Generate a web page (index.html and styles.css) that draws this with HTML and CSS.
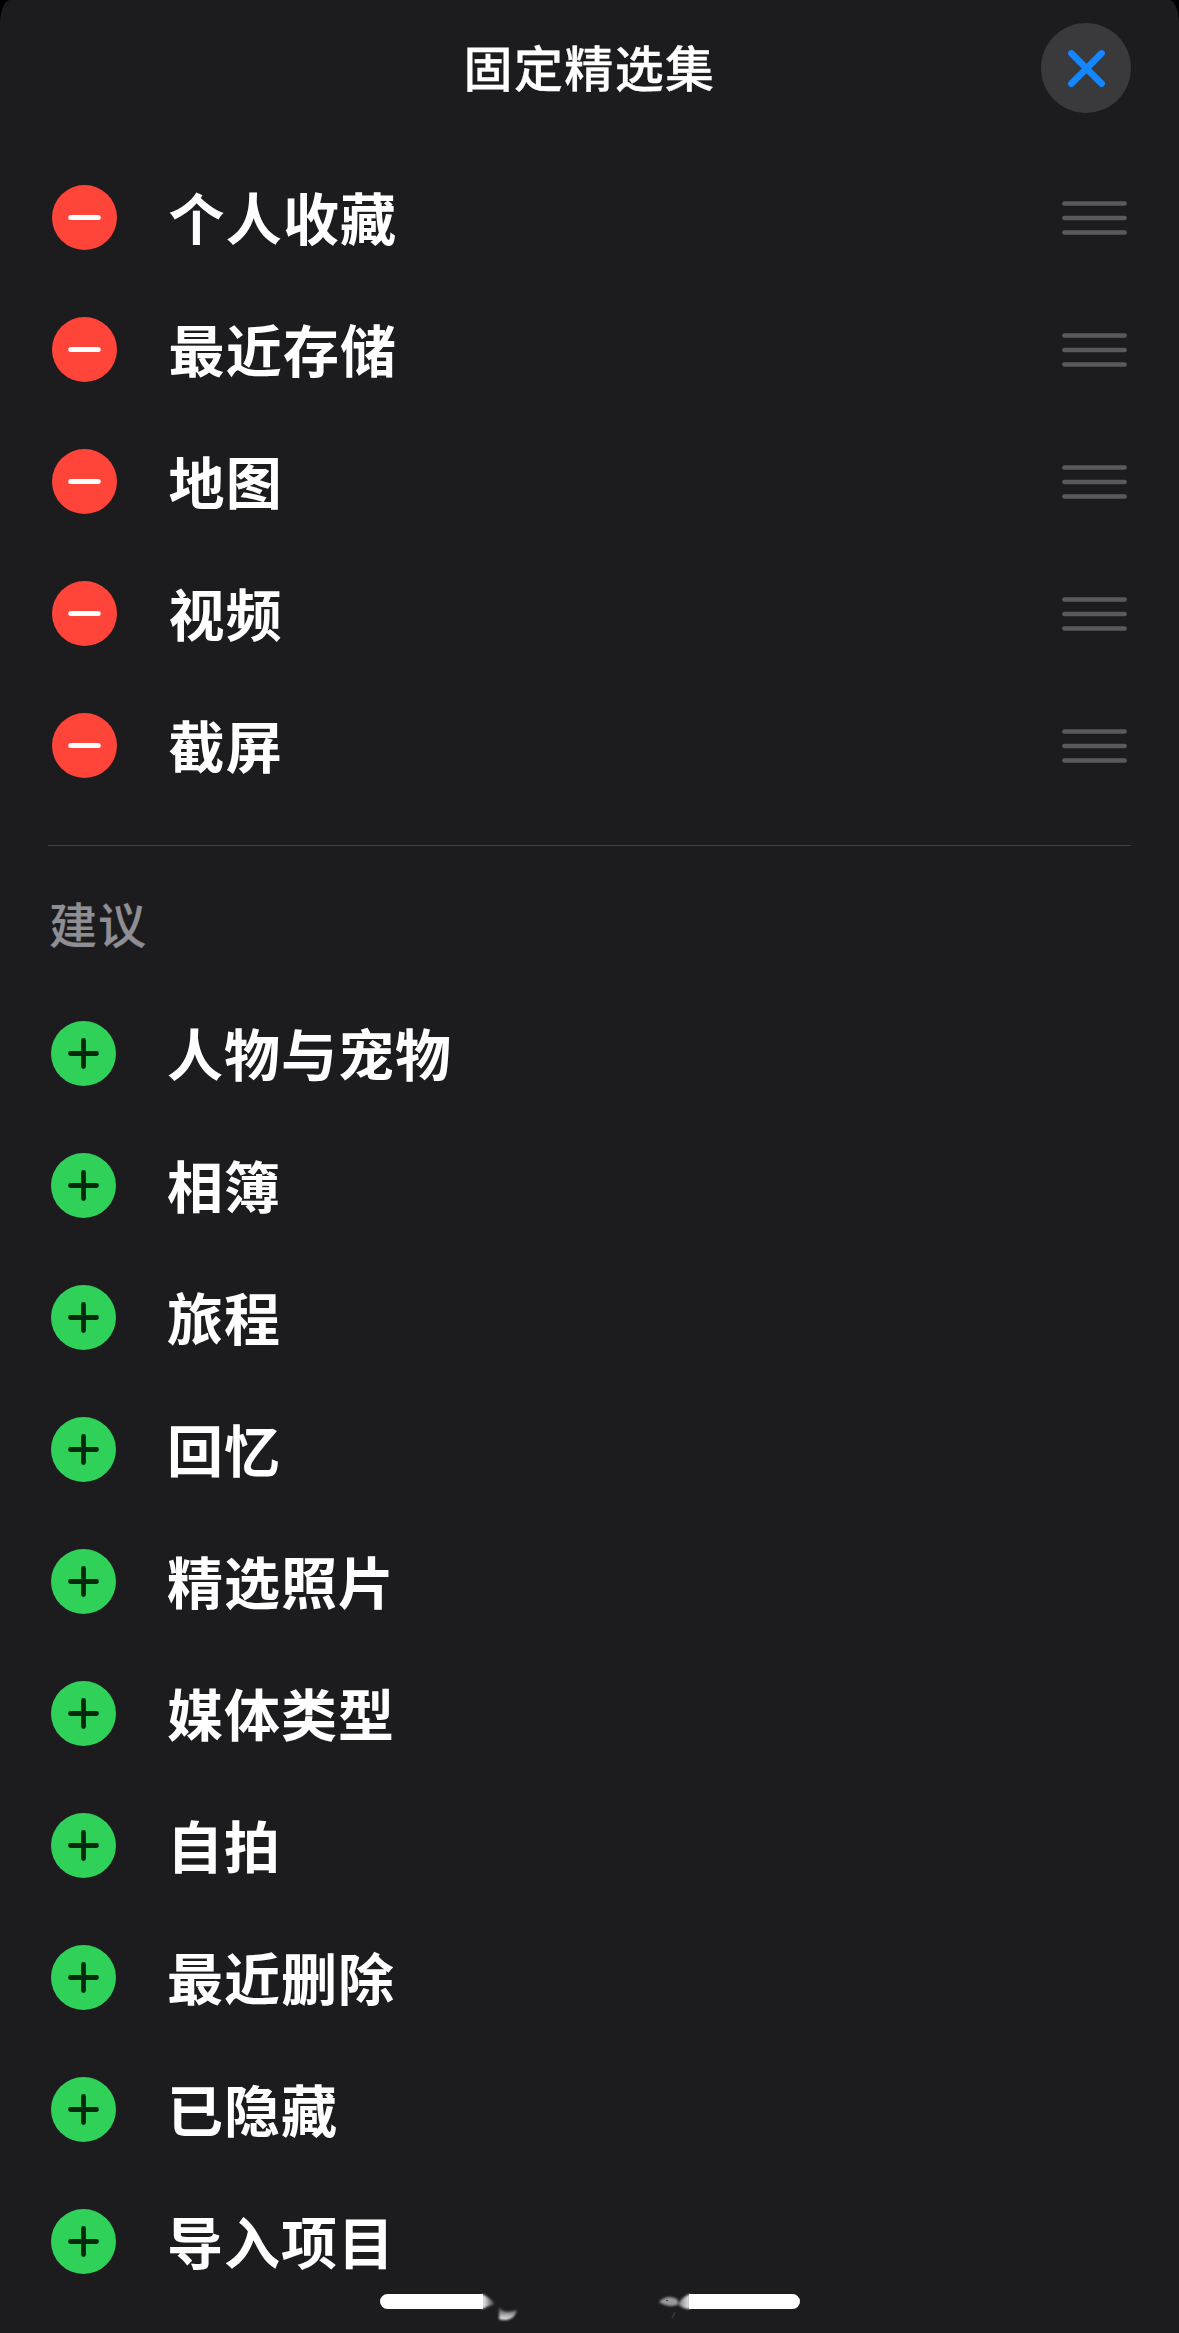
FILE: index.html
```html
<!DOCTYPE html>
<html lang="zh-CN">
<head>
<meta charset="utf-8">
<title>固定精选集</title>
<link rel="stylesheet" href="styles.css">
</head>
<body>
<svg class="symbols" width="0" height="0" aria-hidden="true">
  <symbol id="remove" viewBox="0 0 65 65"><circle cx="32.5" cy="32.5" r="32.5" fill="#ff453a"/><path d="M18.8 32.5h27.4" stroke="#fff" stroke-width="5" stroke-linecap="round"/></symbol>
  <symbol id="add" viewBox="0 0 65 65"><circle cx="32.5" cy="32.5" r="32.5" fill="#30d158"/><path d="M19.5 32.5h26M32.5 19.5v26" stroke="#05290f" stroke-width="4.8" stroke-linecap="round"/></symbol>
  <symbol id="grip" viewBox="0 0 65 34"><path d="M2.4 2.5h60.2M2.4 17h60.2M2.4 31.5h60.2" stroke="#5a5a5c" stroke-width="4.6" stroke-linecap="round"/></symbol>
</svg>
<main class="sheet">
  <header class="header">
    <h1 class="title">固定精选集</h1>
    <button class="close" aria-label="关闭"><svg width="37" height="37" viewBox="0 0 37 37"><path d="M3.4 3.4 33.6 33.6M33.6 3.4 3.4 33.6" stroke="#1686fb" stroke-width="6.6" stroke-linecap="round"/></svg></button>
  </header>
  <ul class="list">
    <li class="row"><svg class="icon"><use href="#remove"/></svg><span class="label">个人收藏</span><svg class="grip"><use href="#grip"/></svg></li>
    <li class="row"><svg class="icon"><use href="#remove"/></svg><span class="label">最近存储</span><svg class="grip"><use href="#grip"/></svg></li>
    <li class="row"><svg class="icon"><use href="#remove"/></svg><span class="label">地图</span><svg class="grip"><use href="#grip"/></svg></li>
    <li class="row"><svg class="icon"><use href="#remove"/></svg><span class="label">视频</span><svg class="grip"><use href="#grip"/></svg></li>
    <li class="row"><svg class="icon"><use href="#remove"/></svg><span class="label">截屏</span><svg class="grip"><use href="#grip"/></svg></li>
  </ul>
  <section class="suggestions">
    <h2 class="subtitle">建议</h2>
    <ul class="list list-add">
      <li class="row"><svg class="icon"><use href="#add"/></svg><span class="label">人物与宠物</span></li>
      <li class="row"><svg class="icon"><use href="#add"/></svg><span class="label">相簿</span></li>
      <li class="row"><svg class="icon"><use href="#add"/></svg><span class="label">旅程</span></li>
      <li class="row"><svg class="icon"><use href="#add"/></svg><span class="label">回忆</span></li>
      <li class="row"><svg class="icon"><use href="#add"/></svg><span class="label">精选照片</span></li>
      <li class="row"><svg class="icon"><use href="#add"/></svg><span class="label">媒体类型</span></li>
      <li class="row"><svg class="icon"><use href="#add"/></svg><span class="label">自拍</span></li>
      <li class="row"><svg class="icon"><use href="#add"/></svg><span class="label">最近删除</span></li>
      <li class="row"><svg class="icon"><use href="#add"/></svg><span class="label">已隐藏</span></li>
      <li class="row"><svg class="icon"><use href="#add"/></svg><span class="label">导入项目</span></li>
    </ul>
  </section>
  <svg class="home" width="420" height="40" viewBox="0 0 420 40" aria-hidden="true">
    <defs>
      <filter id="soft" x="-40%" y="-40%" width="180%" height="180%"><feGaussianBlur stdDeviation="1.3"/></filter>
      <linearGradient id="fadeLeft"><stop offset="0" stop-color="#fff"/><stop offset="1" stop-color="#333"/></linearGradient>
      <linearGradient id="fadeRight"><stop offset="0" stop-color="#777"/><stop offset="1" stop-color="#eee"/></linearGradient>
      <linearGradient id="fadeDown" x2="0" y2="1"><stop offset="0" stop-color="#2a2a2a"/><stop offset="1" stop-color="#eee"/></linearGradient>
    </defs>
    <path d="M102 10Q109 13 115 20Q108 22 102 25z" fill="url(#fadeLeft)" filter="url(#soft)"/>
    <path d="M119 22Q122 31 137 26Q135 35 126 36Q120 36 119 35z" fill="url(#fadeDown)" filter="url(#soft)"/>
    <path d="M279 18Q287 10 297 15L299 20Q290 25 279 18z" fill="#999" filter="url(#soft)"/>
    <path d="M310 10Q302 13 298 20Q302 25 310 25z" fill="url(#fadeRight)" filter="url(#soft)"/>
    <path d="M295 28l-3 6" stroke="#3c3c3c" stroke-width="1.5"/>
    <circle cx="287" cy="16.5" r=".8" fill="#222"/>
    <path d="M103 10H7.5a7.5 7.5 0 0 0 0 15H103zM309 10h103.5a7.5 7.5 0 0 1 0 15H309z" fill="#fff"/>
  </svg>
</main>
</body>
</html>
```
FILE: styles.css
```css
* { box-sizing: border-box; }
body {
  margin: 0;
  background: #000;
  color: #fff;
  font-family: "Noto Sans CJK SC", sans-serif;
}
.symbols { position: absolute; }
.sheet {
  position: relative;
  height: 2333px;
  overflow: hidden;
  padding: 0 48px;
  background: #1c1c1e;
  border-radius: 10px 10px 0 0 / 24px 24px 0 0;
}
.header {
  display: grid;
  grid-template-columns: 90px 1fr 90px;
  align-items: start;
  height: 151.5px;
  padding-top: 23px;
}
.title {
  grid-column: 2;
  margin: 0;
  font-size: 49px;
  font-weight: 500;
  line-height: 86px;
  letter-spacing: 1.4px;
  text-align: center;
  -webkit-text-stroke: 0.3px currentColor;
}
.close {
  display: flex;
  align-items: center;
  justify-content: center;
  width: 90px;
  height: 90px;
  padding: 0;
  border: 0;
  border-radius: 50%;
  background: #3a3a3c;
}
.list { margin: 0; padding: 0 4px 0 3.5px; list-style: none; }
.list-add { padding-left: 3px; }
.row { display: flex; align-items: center; height: 132px; }
.icon { flex: none; width: 65px; height: 65px; }
.label {
  margin-left: 52px;
  font-size: 56px;
  font-weight: 700;
  line-height: 80px;
  letter-spacing: 1.2px;
  transform: translateY(-2px);
}
.list-add .label { margin-left: 51px; letter-spacing: 1px; }
.grip { width: 65px; height: 34px; margin-left: auto; }
.suggestions { margin-top: 33.5px; border-top: 1px solid #414144; }
.subtitle {
  height: 141.5px;
  margin: 0;
  padding: 38px 0 0 1px;
  color: #8e8e93;
  font-size: 48px;
  font-weight: 500;
  line-height: 76px;
  letter-spacing: 1px;
  -webkit-text-stroke: 0.2px currentColor;
}
.home { position: absolute; left: 380px; bottom: 9px; }
```
